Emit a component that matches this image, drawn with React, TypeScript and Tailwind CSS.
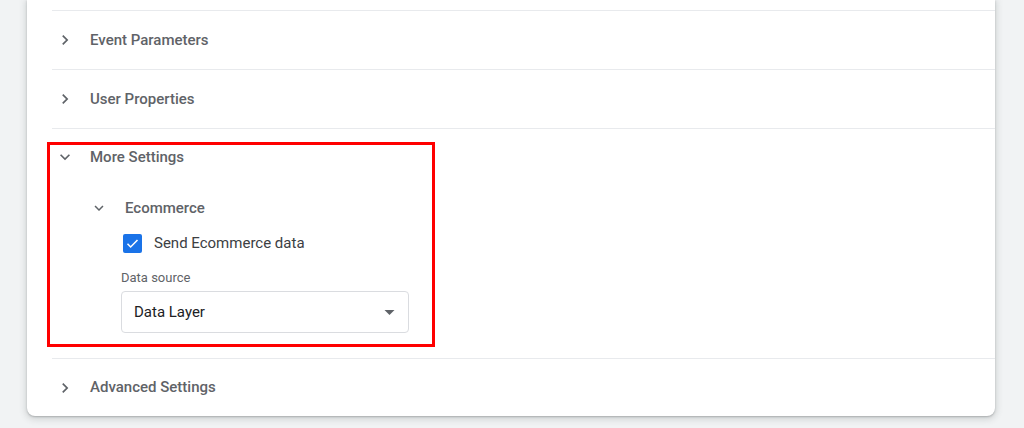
import React from "react";

const ChevronRight = ({ size = 20 }: { size?: number }) => (
  <svg width={size} height={size} viewBox="0 0 24 24" className="shrink-0">
    <path d="M10 6L8.59 7.41 13.17 12l-4.58 4.59L10 18l6-6z" fill="#5f6368" />
  </svg>
);

const ChevronDown = ({ size = 20 }: { size?: number }) => (
  <svg width={size} height={size} viewBox="0 0 24 24" className="shrink-0">
    <path d="M16.59 8.59L12 13.17 7.41 8.59 6 10l6 6 6-6z" fill="#5f6368" />
  </svg>
);

const Row = ({ title, last }: { title: string; last?: boolean }) => (
  <div
    className={`ml-[25px] flex items-center gap-[15px] border-t border-[#e8eaed] pl-[3px] ${
      last ? "h-[58px]" : "h-[59px]"
    }`}
  >
    <ChevronRight />
    <span className="text-[15px] font-medium text-[#5f6368]">{title}</span>
  </div>
);

const App = () => {
  return (
    <div className="min-h-screen bg-[#f1f3f4] px-[27px] font-['Roboto',sans-serif]">
      {/* card, top is scrolled out of view */}
      <div className="w-[968px] rounded-b-lg bg-white pt-[10px] shadow-[0_1px_2px_rgba(60,64,67,0.3),0_2px_6px_2px_rgba(60,64,67,0.15)]">
        <Row title="Event Parameters" />
        <Row title="User Properties" />

        {/* expanded section */}
        <div className="relative ml-[25px] border-t border-[#e8eaed]">
          <div className="flex h-[56px] items-center gap-[15px] pl-[3px]">
            <ChevronDown />
            <span className="text-[15px] font-medium text-[#5f6368]">More Settings</span>
          </div>

          <div className="mt-[3px] flex h-[40px] items-center gap-[17px] pl-[38px]">
            <ChevronDown size={18} />
            <span className="text-[15px] font-medium text-[#5f6368]">Ecommerce</span>
          </div>

          <div className="flex h-[30px] items-center gap-3 pl-[71px]">
            <div className="flex h-[19px] w-[19px] items-center justify-center rounded-[2px] bg-[#1a73e8]">
              <svg width="15" height="15" viewBox="0 0 24 24">
                <path d="M4 12.5l5 5L20 6.5" fill="none" stroke="white" strokeWidth="2.5" />
              </svg>
            </div>
            <span className="text-[15px] text-[#3c4043]">Send Ecommerce data</span>
          </div>

          <div className="pl-[69px] pb-[25px]">
            <div className="mt-3 text-[13px] leading-[16px] text-[#5f6368]">Data source</div>
            <div className="mt-[5px] flex h-[42px] w-[288px] items-center justify-between rounded border border-[#dadce0] pl-3 pr-[13px]">
              <span className="text-[15px] text-[#202124]">Data Layer</span>
              <svg width="11" height="5" viewBox="0 0 10 5">
                <polygon points="0,0 10,0 5,5" fill="#5f6368" />
              </svg>
            </div>
          </div>

          {/* red annotation box */}
          <div className="pointer-events-none absolute left-[-5px] top-[13px] h-[205px] w-[388px] border-[3px] border-[#ff0000]" />
        </div>

        <Row title="Advanced Settings" last />
      </div>
    </div>
  );
};

export default App;
